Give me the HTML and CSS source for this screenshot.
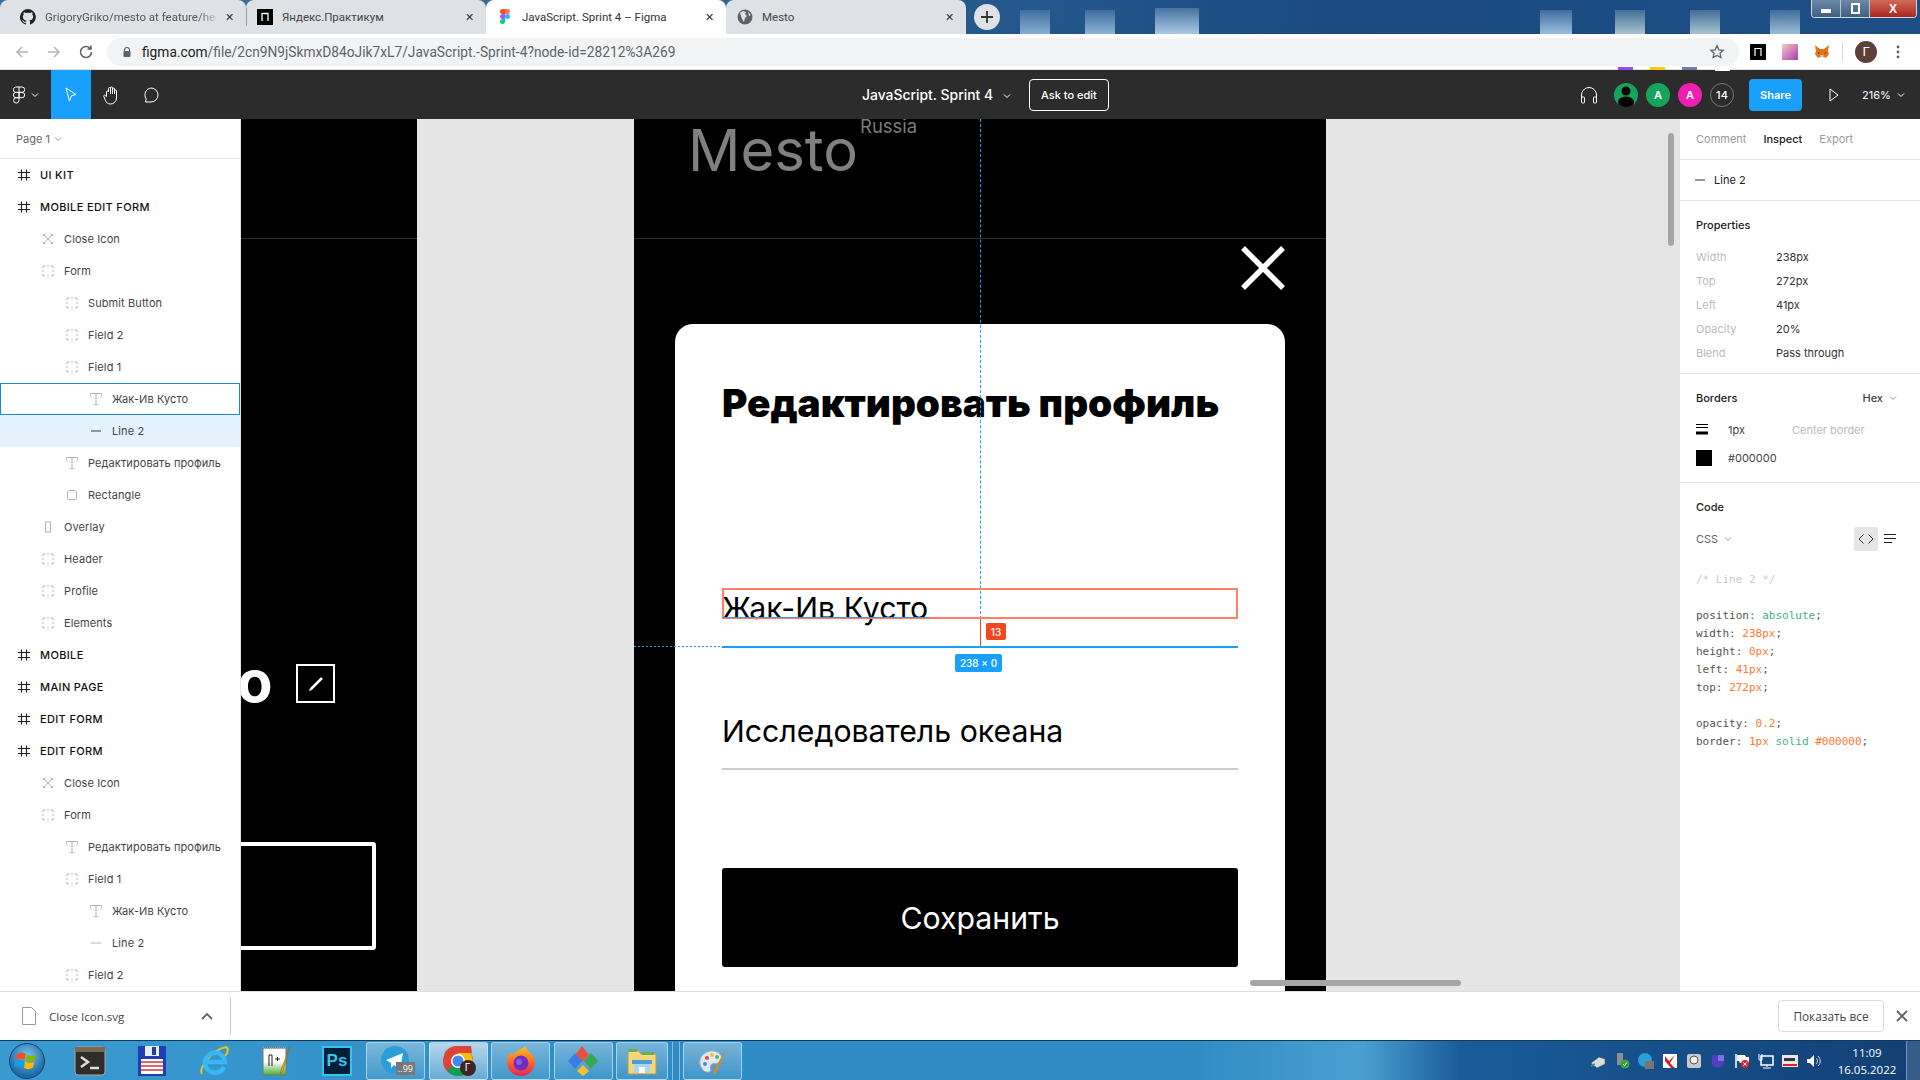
FILE: index.html
```html
<!DOCTYPE html>
<html lang="en">
<head>
    <meta charset="UTF-8">
    <title>JavaScript. Sprint 4 – Figma</title>
    <link rel="stylesheet" href="styles.css">
</head>
<body>

<svg class="defs" width="0" height="0">
    <symbol id="i-frame" viewBox="0 0 16 16"><path d="M5.500 2.500v11M10.500 2.500v11M2 5.500h12M2 10.500h12" fill="none" stroke="#222" stroke-width="1.200"/></symbol>
    <symbol id="i-group" viewBox="0 0 16 16"><path d="M3 3h2M7 3h2M11 3h2M3 13h2M7 13h2M11 13h2M3 3v2M3 7v2M3 11v2M13 3v2M13 7v2M13 11v2" fill="none" stroke="#b3b3b3"/></symbol>
    <symbol id="i-text" viewBox="0 0 16 16"><path d="M2.500 5V2.500h11V5M8 2.500v11M6 13.500h4" fill="none" stroke="#b3b3b3"/></symbol>
    <symbol id="i-line" viewBox="0 0 16 16"><path d="M3 8h10" stroke="#ccc" stroke-width="1.500"/></symbol>
    <symbol id="i-line-on" viewBox="0 0 16 16"><path d="M3 8h10" stroke="#777" stroke-width="1.500"/></symbol>
    <symbol id="i-rect" viewBox="0 0 16 16"><rect x="3.500" y="3.500" width="9" height="9" rx="1" fill="none" stroke="#b3b3b3"/></symbol>
    <symbol id="i-phone" viewBox="0 0 16 16"><rect x="5.500" y="3" width="5" height="10" fill="none" stroke="#b3b3b3"/></symbol>
    <symbol id="i-close" viewBox="0 0 16 16"><path d="M3 3l10 10M13 3L3 13M5 3L3 5M13 5l-2-2M3 11l2 2M11 13l2-2" fill="none" stroke="#b3b3b3"/></symbol>
    <symbol id="i-chev" viewBox="0 0 8 8"><path d="M1 2.500l3 3 3-3" fill="none" stroke="currentColor"/></symbol>
</svg>

<div class="chrome">
    <div class="tabstrip">
        <div class="tab">
            <svg class="tab-ico" viewBox="0 0 16 16"><path fill="#222" d="M8 0a8 8 0 0 0-2.500 15.600c.4.100.5-.2.5-.4v-1.400c-2.200.5-2.700-1-2.700-1-.4-.9-.9-1.200-.9-1.200-.7-.5.100-.5.100-.5.800.100 1.200.800 1.200.800.700 1.200 1.900.900 2.300.700.100-.5.300-.9.500-1.100-1.800-.2-3.600-.9-3.600-4 0-.9.300-1.600.800-2.100-.1-.2-.4-1 .100-2.100 0 0 .700-.2 2.200.800a7.600 7.600 0 0 1 4 0c1.500-1 2.200-.8 2.200-.8.400 1.100.2 1.900.1 2.100.5.600.8 1.300.8 2.100 0 3.100-1.900 3.700-3.700 3.900.3.300.6.800.6 1.500v2.200c0 .2.100.5.600.4A8 8 0 0 0 8 0z"/></svg>
            <span class="tab-title fade">GrigoryGriko/mesto at feature/he</span>
            <span class="tab-x">✕</span>
        </div>
        <div class="tab tab-sep">
            <svg class="tab-ico" viewBox="0 0 16 16"><rect width="16" height="16" fill="#000"/><path d="M5 12V4.500h6V12" fill="none" stroke="#fff" stroke-width="1.300"/></svg>
            <span class="tab-title">Яндекс.Практикум</span>
            <span class="tab-x">✕</span>
        </div>
        <div class="tab tab-active">
            <svg class="tab-ico" viewBox="0 0 16 16"><path fill="#f24e1e" d="M3 0h5v5H5.500a2.500 2.500 0 0 1 0-5z"/><path fill="#ff7262" d="M8 0h2.500a2.500 2.500 0 0 1 0 5H8z"/><path fill="#a259ff" d="M5.500 5H8v5H5.500a2.500 2.500 0 0 1 0-5z"/><circle cx="10.500" cy="7.500" r="2.500" fill="#1abcfe"/><path fill="#0acf83" d="M5.500 10H8v2.500A2.500 2.500 0 1 1 5.500 10z"/></svg>
            <span class="tab-title">JavaScript. Sprint 4 – Figma</span>
            <span class="tab-x">✕</span>
        </div>
        <div class="tab">
            <svg class="tab-ico" viewBox="0 0 16 16"><circle cx="8" cy="8" r="7.500" fill="#5f6368"/><path fill="#dee1e6" d="M3 4l3-2 3 1-1 2 2 2-2 2-1 4-2-3-1-3zM11 3l3 3-2 1z"/></svg>
            <span class="tab-title">Mesto</span>
            <span class="tab-x">✕</span>
        </div>
        <div class="newtab">
            <svg width="14" height="14" viewBox="0 0 14 14"><path d="M7 1v12M1 7h12" stroke="#333" stroke-width="1.800"/></svg>
        </div>
        <div class="winctl">
            <span class="winbtn"><i class="win-min"></i></span>
            <span class="winbtn"><i class="win-max"></i></span>
            <span class="winbtn winbtn-close">X</span>
        </div>
    </div>

    <div class="addressbar">
        <svg class="nav" viewBox="0 0 16 16"><path d="M14 8H3M8 3L3 8l5 5" fill="none" stroke="#b4b7bb" stroke-width="1.600"/></svg>
        <svg class="nav" viewBox="0 0 16 16"><path d="M2 8h11M8 3l5 5-5 5" fill="none" stroke="#b4b7bb" stroke-width="1.600"/></svg>
        <svg class="nav" viewBox="0 0 16 16"><path d="M13.500 8A5.500 5.500 0 1 1 12 4.200M13 1.500V5H9.500" fill="none" stroke="#5f6368" stroke-width="1.600"/></svg>
        <div class="omnibox">
            <svg class="lock" viewBox="0 0 12 12"><path d="M3.500 5.500V4a2.500 2.500 0 0 1 5 0v1.500" fill="none" stroke="#5f6368" stroke-width="1.200"/><rect x="2.500" y="5" width="7" height="6" rx="1" fill="#5f6368"/></svg>
            <span class="url"><b>figma.com</b>/file/2cn9N9jSkmxD84oJik7xL7/JavaScript.-Sprint-4?node-id=28212%3A269</span>
            <svg class="star" viewBox="0 0 16 16"><path d="M8 1.800l1.900 4 4.300.500-3.200 3 .900 4.300L8 11.400l-3.900 2.200.900-4.300-3.200-3 4.300-.5z" fill="none" stroke="#5f6368" stroke-width="1.300"/></svg>
        </div>
        <div class="exts">
            <svg class="ext" viewBox="0 0 16 16"><rect width="16" height="16" fill="#000"/><path d="M5 12V4.500h6V12" fill="none" stroke="#fff" stroke-width="1.200"/></svg>
            <svg class="ext" viewBox="0 0 16 16"><defs><linearGradient id="ext-grad" x1="0" y1="0" x2="1" y2="1"><stop offset="0" stop-color="#f8c8c0"/><stop offset="1" stop-color="#a83cb8"/></linearGradient></defs><rect width="16" height="16" fill="url(#ext-grad)"/></svg>
            <svg class="ext" viewBox="0 0 16 16"><path fill="#e2761b" d="M1 1l5 4h4l5-4-1 6 1 3-3 4-2-1H6l-2 1-3-4 1-3z"/><path fill="#f6c9a0" d="M6 11h4l-1 2H7z"/><path fill="#763d16" d="M4 8l2 1-2 1zM12 8l-2 1 2 1z"/></svg>
            <span class="ext-div"></span>
            <span class="profile">Г</span>
            <svg class="kebab" viewBox="0 0 4 16"><circle cx="2" cy="3" r="1.400" fill="#5f6368"/><circle cx="2" cy="8" r="1.400" fill="#5f6368"/><circle cx="2" cy="13" r="1.400" fill="#5f6368"/></svg>
        </div>
    </div>
</div>

<div class="toolbar">
    <div class="tool-left">
        <div class="tool-menu">
            <svg width="12" height="18" viewBox="0 0 12 18"><path d="M3 1h6a2.700 2.700 0 0 1 0 5.400H3A2.700 2.700 0 0 1 3 1zM3 6.400h3v5.300H3a2.650 2.650 0 0 1 0-5.300zM6 6.400h3a2.650 2.650 0 0 1 0 5.300H6zM3 11.700h3v2.700a2.700 2.700 0 1 1-3-2.700zM6 1v5.400" fill="none" stroke="#fff"/></svg>
            <svg class="chev-sm" viewBox="0 0 8 8"><use href="#i-chev"/></svg>
        </div>
        <div class="tool tool-on">
            <svg width="16" height="18" viewBox="0 0 16 18"><path d="M3 2l10 6.500-4.500 1.200L6.500 15z" fill="none" stroke="#fff"/></svg>
        </div>
        <div class="tool">
            <svg width="20" height="20" viewBox="0 0 20 20"><path d="M5.500 11V7a1 1 0 0 1 2 0V3.500a1 1 0 0 1 2 0V3a1 1 0 0 1 2 0v1a1 1 0 0 1 2 0v2a1 1 0 0 1 2 0v7a6 6 0 0 1-6 6c-3 0-4-1.500-5-3.500L2.800 11.500c-.6-1.200 1.200-2 2-.7l.7 1.200M9.500 3.500V9M11.500 3v6M13.500 4v5" fill="none" stroke="#fff"/></svg>
        </div>
        <div class="tool">
            <svg width="18" height="18" viewBox="0 0 18 18"><path d="M9 2a7 7 0 0 1 0 14H3.500l.7-3A7 7 0 0 1 9 2z" fill="none" stroke="#fff"/></svg>
        </div>
    </div>
    <div class="tool-title">JavaScript. Sprint 4 <svg class="chev-sm" viewBox="0 0 8 8"><use href="#i-chev"/></svg></div>
    <div class="ask">Ask to edit</div>
    <div class="tool-right">
        <svg class="phones" width="20" height="20" viewBox="0 0 20 20"><path d="M2.500 14v-4a7.500 7.500 0 0 1 15 0v4" fill="none" stroke="#fff"/><rect x="2.500" y="12" width="3" height="6" rx="1" fill="none" stroke="#fff"/><rect x="14.500" y="12" width="3" height="6" rx="1" fill="none" stroke="#fff"/></svg>
        <div class="avatars">
            <div class="avatar av-photo"><i class="cursor c-purple"></i>
                <svg width="24" height="24" viewBox="0 0 24 24"><circle cx="12" cy="8" r="4.500"/><ellipse cx="12" cy="19" rx="8" ry="5.500"/></svg>
            </div>
            <div class="avatar av-green"><i class="cursor c-yellow"></i>A</div>
            <div class="avatar av-pink"><i class="cursor c-steel"></i>A</div>
            <div class="avatar av-more"><i class="cursor c-white"></i>14</div>
        </div>
        <div class="share">Share</div>
        <svg class="play" width="12" height="14" viewBox="0 0 12 14"><path d="M2 1l8 6-8 6z" fill="none" stroke="#fff"/></svg>
        <div class="zoom">216% <svg class="chev-sm" viewBox="0 0 8 8"><use href="#i-chev"/></svg></div>
    </div>
</div>

<div class="workspace">
    <aside class="layers">
        <div class="page-name">Page 1 <svg class="chev-sm" viewBox="0 0 8 8"><use href="#i-chev"/></svg></div>
        <div class="layer d0"><svg class="layer-ico"><use href="#i-frame"/></svg>UI KIT</div>
        <div class="layer d0"><svg class="layer-ico"><use href="#i-frame"/></svg>MOBILE EDIT FORM</div>
        <div class="layer d1"><svg class="layer-ico"><use href="#i-close"/></svg>Close Icon</div>
        <div class="layer d1"><svg class="layer-ico"><use href="#i-group"/></svg>Form</div>
        <div class="layer d2"><svg class="layer-ico"><use href="#i-group"/></svg>Submit Button</div>
        <div class="layer d2"><svg class="layer-ico"><use href="#i-group"/></svg>Field 2</div>
        <div class="layer d2"><svg class="layer-ico"><use href="#i-group"/></svg>Field 1</div>
        <div class="layer d3 layer-hover"><svg class="layer-ico"><use href="#i-text"/></svg>Жак-Ив Кусто</div>
        <div class="layer d3 layer-sel"><svg class="layer-ico"><use href="#i-line-on"/></svg>Line 2</div>
        <div class="layer d2"><svg class="layer-ico"><use href="#i-text"/></svg>Редактировать профиль</div>
        <div class="layer d2"><svg class="layer-ico"><use href="#i-rect"/></svg>Rectangle</div>
        <div class="layer d1"><svg class="layer-ico"><use href="#i-phone"/></svg>Overlay</div>
        <div class="layer d1"><svg class="layer-ico"><use href="#i-group"/></svg>Header</div>
        <div class="layer d1"><svg class="layer-ico"><use href="#i-group"/></svg>Profile</div>
        <div class="layer d1"><svg class="layer-ico"><use href="#i-group"/></svg>Elements</div>
        <div class="layer d0"><svg class="layer-ico"><use href="#i-frame"/></svg>MOBILE</div>
        <div class="layer d0"><svg class="layer-ico"><use href="#i-frame"/></svg>MAIN PAGE</div>
        <div class="layer d0"><svg class="layer-ico"><use href="#i-frame"/></svg>EDIT FORM</div>
        <div class="layer d0"><svg class="layer-ico"><use href="#i-frame"/></svg>EDIT FORM</div>
        <div class="layer d1"><svg class="layer-ico"><use href="#i-close"/></svg>Close Icon</div>
        <div class="layer d1"><svg class="layer-ico"><use href="#i-group"/></svg>Form</div>
        <div class="layer d2"><svg class="layer-ico"><use href="#i-text"/></svg>Редактировать профиль</div>
        <div class="layer d2"><svg class="layer-ico"><use href="#i-group"/></svg>Field 1</div>
        <div class="layer d3"><svg class="layer-ico"><use href="#i-text"/></svg>Жак-Ив Кусто</div>
        <div class="layer d3"><svg class="layer-ico"><use href="#i-line"/></svg>Line 2</div>
        <div class="layer d2"><svg class="layer-ico"><use href="#i-group"/></svg>Field 2</div>
    </aside>

    <main class="canvas">
        <!-- frame on the left, cut by the layers panel -->
        <div class="frame frame-side">
            <div class="frame-rule"></div>
            <div class="side-name">o</div>
            <div class="side-edit">
                <svg width="18" height="18" viewBox="0 0 18 18"><path d="M4 14L15 3" stroke="#fff" stroke-width="2.500"/><path d="M2 16l1-3 2 2z" fill="#fff"/></svg>
            </div>
            <div class="side-card"></div>
        </div>

        <div class="frame frame-main">
            <div class="logo">Mesto</div>
            <div class="logo-sub">Russia</div>
            <div class="frame-rule"></div>
            <svg class="modal-close" width="44" height="44" viewBox="0 0 44 44"><path d="M2 2l40 40M42 2L2 42" stroke="#fff" stroke-width="5.500"/></svg>
            <div class="modal">
                <h1 class="modal-title">Редактировать профиль</h1>
                <div class="field-text field-name">Жак-Ив Кусто</div>
                <div class="field-line field-line-on"></div>
                <div class="field-text field-about">Исследователь океана</div>
                <div class="field-line"></div>
                <div class="submit">Сохранить</div>
            </div>
        </div>

        <!-- figma selection overlays -->
        <div class="guide-v"></div>
        <div class="guide-h"></div>
        <div class="hover-box"></div>
        <div class="text-under"></div>
        <div class="measure-line"></div>
        <div class="measure-badge">13</div>
        <div class="size-badge">238 × 0</div>
        <div class="scroll-v"></div>
        <div class="scroll-h"></div>
        <div class="help">?</div>
    </main>

    <aside class="inspect">
        <div class="insp-tabs">
            <span>Comment</span><span class="on">Inspect</span><span>Export</span>
        </div>
        <div class="insp-node"><svg class="node-ico" viewBox="0 0 16 16"><use href="#i-line-on"/></svg>Line 2</div>
        <section class="insp-sec sec-props">
            <h3>Properties</h3>
            <div class="prop"><span>Width</span><b>238px</b></div>
            <div class="prop"><span>Top</span><b>272px</b></div>
            <div class="prop"><span>Left</span><b>41px</b></div>
            <div class="prop"><span>Opacity</span><b>20%</b></div>
            <div class="prop"><span>Blend</span><b>Pass through</b></div>
        </section>
        <section class="insp-sec sec-borders">
            <h3 class="sec-head">Borders <em>Hex <svg class="chev-sm" viewBox="0 0 8 8"><use href="#i-chev"/></svg></em></h3>
            <div class="border-row">
                <svg class="border-ico" width="12" height="12" viewBox="0 0 12 12"><path d="M0 .5h12M0 3.500h12" stroke="#000"/><path d="M0 9h12" stroke="#000" stroke-width="3"/></svg>
                <span class="bw">1px</span><span class="bpos">Center border</span>
            </div>
            <div class="border-row row-color"><i class="swatch"></i><span class="bw">#000000</span></div>
        </section>
        <section class="insp-sec sec-code">
            <h3>Code</h3>
            <div class="code-head">
                <span class="lang">CSS <svg class="chev-sm" viewBox="0 0 8 8"><use href="#i-chev"/></svg></span>
                <span class="code-btn"><svg width="16" height="12" viewBox="0 0 16 12"><path d="M5.500 1.500L1 6l4.500 4.500M10.500 1.500L15 6l-4.500 4.500" fill="none" stroke="#333"/></svg></span>
                <svg class="wrap-ico" width="12" height="12" viewBox="0 0 12 12"><path d="M0 1.500h12M0 5.500h12M0 9.500h8" stroke="#222"/></svg>
            </div>
            <pre class="code"><span class="cm">/* Line 2 */</span>

position: <span class="kw">absolute</span>;
width: <span class="nm">238px</span>;
height: <span class="nm">0px</span>;
left: <span class="nm">41px</span>;
top: <span class="nm">272px</span>;

opacity: <span class="nm">0.2</span>;
border: <span class="nm">1px</span> <span class="kw">solid</span> <span class="nm">#000000</span>;</pre>
        </section>
    </aside>
</div>

<div class="downloads">
    <div class="dl-item">
        <svg width="14" height="18" viewBox="0 0 14 18"><path d="M.5.500h9l4 4v13H.500z" fill="#fff" stroke="#9a9a9a"/></svg>
        <span class="dl-name">Close Icon.svg</span>
        <svg class="dl-chev" width="12" height="8" viewBox="0 0 12 8"><path d="M1 7l5-5 5 5" fill="none" stroke="#5f6368" stroke-width="1.800"/></svg>
    </div>
    <div class="dl-all">Показать все</div>
    <svg class="dl-close" width="12" height="12" viewBox="0 0 12 12"><path d="M1 1l10 10M11 1L1 11" stroke="#5f6368" stroke-width="1.800"/></svg>
</div>

<footer class="taskbar">
    <div class="orb">
        <svg width="26" height="26" viewBox="0 0 26 26"><path fill="#f25022" d="M3 6c3-2 6-2 9 0l-1.500 6c-3-1.500-6-1.500-9 0z"/><path fill="#7fba00" d="M13 6.500c3 2 6 2 9 0l-1.500 6c-3 2-6 2-9 0z"/><path fill="#00a4ef" d="M1.500 13c3-1.500 6-1.500 8.800 0L9 19c-3-1.500-6-1.500-9 0z"/><path fill="#ffb900" d="M11.500 13.500c3 2 6 2 9 0L19 19.500c-3 2-6 2-9 0z"/></svg>
    </div>
    <div class="pinned">
        <svg class="tb-ico" viewBox="0 0 32 32"><rect x="1" y="2" width="30" height="28" rx="3" fill="#2f2d2a" stroke="#aaa"/><rect x="1" y="2" width="30" height="5" fill="#7b6a52"/><path d="M7 12l7 5-7 5" fill="none" stroke="#ddd" stroke-width="2.500"/><path d="M16 23h9" stroke="#ddd" stroke-width="2.500"/></svg>
        <svg class="tb-ico" viewBox="0 0 32 32"><path d="M2 1h28v30H2z" fill="#1d3fb3"/><rect x="9" y="1" width="14" height="10" fill="#e8eef5"/><rect x="16" y="2" width="4" height="8" fill="#1d3fb3"/><rect x="5" y="14" width="22" height="15" fill="#fff"/><path d="M5 17h22M5 21h22M5 25h22" stroke="#d23040" stroke-width="1.600"/></svg>
        <svg class="tb-ico" viewBox="0 0 32 32"><path d="M4 29C0 24 13 5 28 2c3 1 2 6-1 9" fill="none" stroke="#f0c020" stroke-width="2"/><path d="M26 22A10 10 0 1 1 27 17H8" fill="none" stroke="#35b8f5" stroke-width="4.500"/></svg>
        <svg class="tb-ico" viewBox="0 0 32 32"><defs><linearGradient id="npp-grad" x1="0" y1="0" x2="0" y2="1"><stop offset=".5" stop-color="#fff"/><stop offset="1" stop-color="#4cb030"/></linearGradient></defs><rect x="3" y="3" width="23" height="27" fill="url(#npp-grad)" stroke="#777"/><path d="M3 3h23" stroke="#999" stroke-width="2" stroke-dasharray="1 1"/><path d="M9 10v11M12 10v11M9 10h3M15 14h5M17.500 12v4" stroke="#222" fill="none"/><path d="M30 2L21 25l-1 4 3-3z" fill="#e0a020" stroke="#8a5a10" stroke-width=".5"/></svg>
        <div class="ps-ico"><span>Ps</span></div>
    </div>
    <div class="running">
        <div class="tb-btn">
            <svg class="tb-ico" viewBox="0 0 32 32"><circle cx="15" cy="15" r="14" fill="#2a9fd8"/><path d="M6 15l17-7-3 16-6-4-3 3v-5z" fill="#fff"/></svg>
            <span class="tb-badge">..99</span>
        </div>
        <div class="tb-btn tb-btn-on">
            <svg class="tb-ico" viewBox="0 0 32 32"><circle cx="16" cy="16" r="15" fill="#db4437"/><path d="M16 16L29 24A15 15 0 0 1 5 26z" fill="#0f9d58"/><path d="M16 16L16 1A15 15 0 0 1 30 20z" fill="#fbbc05"/><path d="M2 9A15 15 0 0 1 16 1h13l1 7H16z" fill="#db4437"/><circle cx="16" cy="16" r="7" fill="#fff"/><circle cx="16" cy="16" r="5.500" fill="#4285f4"/></svg>
            <span class="tb-profile">Г</span>
        </div>
        <div class="tb-btn">
            <svg class="tb-ico" viewBox="0 0 32 32"><defs><linearGradient id="ff-grad" x1="0" y1="0" x2="0" y2="1"><stop offset="0" stop-color="#ffc21c"/><stop offset=".6" stop-color="#ff5c2a"/><stop offset="1" stop-color="#e3255c"/></linearGradient></defs><path d="M20 1c1 5 10 8 10 16a14 14 0 0 1-28 0c0-5 2-8 4-10 0 2 1 3 2 3 1-4 7-4 12-9z" fill="url(#ff-grad)"/><circle cx="16" cy="18" r="7.500" fill="#6a2fc0"/><circle cx="14" cy="17" r="3" fill="#8f5be0"/></svg>
        </div>
        <div class="tb-btn">
            <svg class="tb-ico" viewBox="0 0 32 32"><path d="M15 1l7 9-7 7-7-7z" fill="#e5533d"/><path d="M8 8l7 8-7 8-7-8z" fill="#3b7de8"/><path d="M24 8l7 8-7 8-7-8z" fill="#36a853"/><path d="M16 20l6 6-6 5-6-5z" fill="#fbc02d"/></svg>
        </div>
        <div class="tb-btn tb-btn-folder">
            <svg class="tb-ico" viewBox="0 0 32 32"><path d="M2 6h11l2 3h15v20H2z" fill="#f3d77a" stroke="#b89a44"/><path d="M2 4h9v3H2zM16 7h12v3H16z" fill="#6ab04c"/><rect x="8" y="17" width="16" height="11" fill="#a9d7f2"/><rect x="6" y="15" width="20" height="4" fill="#4e9ed0"/><rect x="13" y="22" width="6" height="6" fill="#fff"/></svg>
        </div>
        <i class="tb-gap"></i>
        <div class="tb-btn">
            <svg class="tb-ico" viewBox="0 0 32 32"><path d="M3 20C1 10 10 5 17 6s10 8 6 11-7 0-9 3 2 6-2 7-7-2-9-7z" fill="#dfe7ef" stroke="#9aa"/><circle cx="10" cy="13" r="2" fill="#e04a3a"/><circle cx="15" cy="10" r="2" fill="#eec23a"/><circle cx="8" cy="19" r="2" fill="#3a8fe0"/><circle cx="20" cy="12" r="2" fill="#4bbb5a"/><path d="M30 2L17 25l-1 5 4-3z" fill="#c68a3a"/></svg>
        </div>
    </div>
    <div class="tray">
        <svg class="tr-ico" viewBox="0 0 16 16"><path d="M1 10l8-6 6 2v5l-8 4z" fill="#ddd" stroke="#555" stroke-width=".6"/><path d="M1 12l4-2v2l-4 2z" fill="#2a8"/></svg>
        <svg class="tr-ico" viewBox="0 0 16 16"><rect x="3" y="0" width="6" height="12" fill="#8a8f94"/><circle cx="11" cy="11" r="4.500" fill="#3aa040"/><path d="M9 11l1.500 1.500L13 9.500" stroke="#fff" fill="none"/></svg>
        <svg class="tr-ico" viewBox="0 0 16 16"><circle cx="7" cy="7" r="7" fill="#2a9fd8"/><rect x="7" y="8" width="9" height="8" fill="#777"/></svg>
        <svg class="tr-ico" viewBox="0 0 16 16"><rect width="14" height="14" x="1" y="1" fill="#fff"/><path d="M3 3l4 5 6-6-5 8 5 5H9L3 8z" fill="#d21f2c"/></svg>
        <svg class="tr-ico" viewBox="0 0 16 16"><rect x="1" y="1" width="14" height="14" rx="2" fill="#c9c9c9"/><circle cx="8" cy="7" r="4" fill="#eee" stroke="#555"/></svg>
        <svg class="tr-ico" viewBox="0 0 16 16"><path d="M2 2h12v8c0 3-3 4-6 5-3-1-6-2-6-5z" fill="#5040c0"/><path d="M8 2h6v6H8z" fill="#8070e0"/></svg>
        <svg class="tr-ico" viewBox="0 0 16 16"><path d="M2 1v14" stroke="#fff" stroke-width="1.500"/><path d="M3 2h8l1 2h3v6H6L5 8H3z" fill="#fff"/><circle cx="11" cy="11" r="4" fill="#e02030"/><path d="M9 9l4 4M13 9l-4 4" stroke="#fff"/></svg>
        <svg class="tr-ico" viewBox="0 0 16 16"><rect x="3" y="3" width="12" height="9" fill="none" stroke="#fff" stroke-width="1.500"/><path d="M9 12v2M5 15h8M1 1v6h3V1" stroke="#fff" fill="none"/></svg>
        <svg class="tr-ico" viewBox="0 0 16 16"><rect y="2" width="16" height="12" fill="#e6e6e6"/><rect x="2" y="5" width="11" height="3" fill="#333"/><rect x="1" y="11" width="14" height="2" fill="#d22"/></svg>
        <svg class="tr-ico" viewBox="0 0 16 16"><path d="M1 6h3l4-4v12l-4-4H1z" fill="#fff"/><path d="M10 5c2 2 2 4 0 6M12 3c3 3 3 7 0 10" fill="none" stroke="#cde"/></svg>
    </div>
    <div class="clock"><span>11:09</span><span>16.05.2022</span></div>
    <div class="show-desktop"></div>
</footer>

</body>
</html>
```

FILE: styles.css
```css
* {
    box-sizing: border-box;
}
html, body {
    margin: 0;
    height: 100%;
}
body {
    width: 1920px;
    height: 1080px;
    overflow: hidden;
    display: flex;
    flex-direction: column;
    font-family: 'Inter', 'Liberation Sans', sans-serif;
    font-size: 11px;
    color: #333;
    background: #fff;
}
.defs {
    position: absolute;
}
.chev-sm {
    width: 8px;
    height: 8px;
    color: inherit;
}

/* browser window */
.tabstrip {
    height: 34px;
    display: flex;
    background-color: #1f5488;
    background-image:
        linear-gradient(rgba(169, 203, 234, .2), rgba(169, 203, 234, .75)),
        linear-gradient(rgba(169, 203, 234, .2), rgba(169, 203, 234, .8)),
        linear-gradient(rgba(185, 214, 238, .25), rgba(185, 214, 238, .9)),
        linear-gradient(rgba(169, 203, 234, .25), rgba(169, 203, 234, .9)),
        linear-gradient(rgba(183, 207, 216, .25), rgba(183, 207, 216, .9)),
        linear-gradient(rgba(183, 207, 216, .25), rgba(183, 207, 216, .9)),
        linear-gradient(rgba(169, 200, 222, .25), rgba(169, 200, 222, .9)),
        linear-gradient(100deg, #3d6f9e 0, #2c6294 40%, #1a4a80 70%, #1d4f84 100%);
    background-size: 30px 24px, 30px 24px, 44px 26px, 32px 24px, 30px 24px, 30px 24px, 30px 24px, 100% 100%;
    background-position: 1020px 10px, 1085px 10px, 1155px 8px, 1540px 10px, 1615px 10px, 1690px 10px, 1770px 10px, 0 0;
    background-repeat: no-repeat;
}
.tab {
    position: relative;
    width: 240px;
    height: 34px;
    display: flex;
    align-items: center;
    padding: 0 12px 0 11px;
    background: #dee1e6;
    border-radius: 8px 8px 0 0;
    font-family: 'Roboto', sans-serif;
    font-size: 11.5px;
    color: #444;
}
.tab:first-child {
    width: 246px;
    padding-left: 20px;
}
.tab-sep::before {
    content: "";
    position: absolute;
    left: 0;
    top: 8px;
    height: 18px;
    border-left: 1px solid #9aa0a6;
}
.tab-active {
    background: #fff;
    color: #333;
}
.tab:last-of-type {
    width: 238px;
}
.tab-ico {
    width: 16px;
    height: 16px;
    flex: none;
    margin-right: 9px;
}
.tab-title {
    flex: 1;
    white-space: nowrap;
    overflow: hidden;
}
.fade {
    color: #555;
    -webkit-mask-image: linear-gradient(to right, #000 88%, transparent);
}
.tab-x {
    font-size: 11px;
    color: #333;
    margin-left: 6px;
}
.newtab {
    width: 26px;
    height: 26px;
    margin: 4px 0 0 8px;
    border-radius: 50%;
    background: #dee1e6;
    display: flex;
    align-items: center;
    justify-content: center;
}
.winctl {
    margin-left: auto;
    margin-right: 3px;
    height: 18px;
    display: flex;
    border: 1px solid #cfd8e0;
    border-top: 0;
    border-radius: 0 0 4px 4px;
    overflow: hidden;
}
.winbtn {
    width: 29px;
    display: flex;
    align-items: center;
    justify-content: center;
    background: linear-gradient(#6d8aa6, #3f5f80);
    border-right: 1px solid #b5c4d2;
}
.winbtn-close {
    width: 46px;
    border-right: 0;
    background: linear-gradient(#d26a5c, #a8281c);
    color: #fff;
    font-family: 'Liberation Sans', sans-serif;
    font-size: 12px;
    font-weight: bold;
}
.win-min {
    width: 10px;
    height: 4px;
    margin-top: 4px;
    background: #fff;
}
.win-max {
    width: 9px;
    height: 11px;
    border: 2px solid #fff;
}
.addressbar {
    height: 36px;
    display: flex;
    align-items: center;
    background: #fff;
    padding-left: 14px;
    border-bottom: 1px solid #e0e0e0;
}
.nav {
    width: 16px;
    height: 16px;
    margin-right: 16px;
}
.omnibox {
    width: 1632px;
    height: 28px;
    margin-left: -3px;
    border-radius: 14px;
    background: #f1f3f4;
    display: flex;
    align-items: center;
    padding: 0 14px;
}
.lock {
    width: 12px;
    height: 12px;
    margin-right: 9px;
}
.url {
    font-family: 'Roboto', sans-serif;
    font-size: 13.75px;
    color: #5f6368;
    flex: 1;
    white-space: nowrap;
}
.url b {
    font-weight: 400;
    color: #202124;
}
.star {
    width: 16px;
    height: 16px;
}
.exts {
    display: flex;
    align-items: center;
    margin-left: 11px;
}
.ext {
    width: 16px;
    height: 16px;
    margin-right: 16px;
}
.ext-div {
    width: 1px;
    height: 20px;
    background: #dadce0;
    margin: 0 12px 0 -4px;
}
.profile {
    width: 22px;
    height: 22px;
    border-radius: 50%;
    background: #5d4037;
    color: #fff;
    font-family: 'Roboto', sans-serif;
    font-size: 13px;
    display: flex;
    align-items: center;
    justify-content: center;
}
.kebab {
    width: 4px;
    height: 16px;
    margin-left: 19px;
}

/* figma toolbar */
.toolbar {
    height: 49px;
    background: #2c2c2c;
    color: #fff;
    display: flex;
    align-items: center;
}
.tool-left {
    flex: 0 0 862px;
    height: 100%;
    display: flex;
}
.tool-menu {
    width: 51px;
    display: flex;
    align-items: center;
    justify-content: center;
    gap: 6px;
}
.tool {
    width: 40px;
    display: flex;
    align-items: center;
    justify-content: center;
}
.tool-on {
    background: #18a0fb;
}
.tool-title {
    width: 167px;
    font-size: 13.9px;
    font-weight: 500;
    white-space: nowrap;
}
.tool-title .chev-sm {
    margin-left: 6px;
}
.ask {
    width: 80px;
    height: 32px;
    border: 1px solid #fff;
    border-radius: 4px;
    display: flex;
    align-items: center;
    justify-content: center;
    font-weight: 500;
}
.tool-right {
    margin-left: auto;
    display: flex;
    align-items: center;
}
.phones {
    margin-right: 15px;
}
.avatars {
    display: flex;
    gap: 8px;
    margin-right: 15px;
}
.avatar {
    position: relative;
    width: 24px;
    height: 24px;
    border-radius: 50%;
    display: flex;
    align-items: center;
    justify-content: center;
    font-weight: 600;
    overflow: visible;
}
.avatar svg {
    border-radius: 50%;
}
.av-photo {
    background: #16a45c;
}
.av-green {
    background: #16a45c;
}
.av-pink {
    background: #f01fb0;
}
.av-more {
    border: 1px solid #777;
    font-weight: 500;
}
.cursor {
    position: absolute;
    top: -16px;
    left: 4px;
    width: 15px;
    height: 3px;
}
.c-purple { background: #9747ff; }
.c-yellow { background: #ffc700; }
.c-steel { background: #6b7fa8; }
.c-white { background: #fff; }
.share {
    width: 53px;
    height: 32px;
    background: #18a0fb;
    border-radius: 4px;
    display: flex;
    align-items: center;
    justify-content: center;
    font-weight: 600;
    margin-right: 26px;
}
.play {
    margin-right: 22px;
}
.zoom {
    width: 58px;
    white-space: nowrap;
}
.zoom .chev-sm {
    margin-left: 3px;
}

/* main area */
.workspace {
    height: 872px;
    display: flex;
}
.layers {
    width: 241px;
    flex: none;
    background: #fff;
    border-right: 1px solid #e5e5e5;
    overflow: hidden;
    z-index: 1;
}
.page-name {
    height: 40px;
    padding-left: 16px;
    border-bottom: 1px solid #e5e5e5;
    display: flex;
    align-items: center;
    gap: 4px;
    color: #666;
}
.page-name .chev-sm {
    color: #999;
}
.layer {
    height: 32px;
    display: flex;
    align-items: center;
    white-space: nowrap;
    letter-spacing: .1px;
    color: #444;
}
.layer-ico {
    width: 16px;
    height: 16px;
    flex: none;
    margin-right: 8px;
}
.d0 {
    padding-left: 16px;
    color: #111;
    font-weight: 500;
    letter-spacing: .35px;
}
.d1 { padding-left: 40px; }
.d2 { padding-left: 64px; }
.d3 { padding-left: 88px; }
.layer-hover {
    border: 1px solid #1a86e0;
    padding-left: 87px;
}
.layer-sel {
    background: #e3f2fd;
}

.canvas {
    position: relative;
    flex: 1;
    overflow: hidden;
    background: #e5e5e5;
}
.frame {
    position: absolute;
    top: 0;
    bottom: 0;
    background: #000;
}
.frame-rule {
    position: absolute;
    top: 119px;
    left: 0;
    right: 0;
    height: 1px;
    background: #2e2e2e;
}
.frame-side {
    left: 0;
    width: 176px;
}
.side-name {
    position: absolute;
    left: -4px;
    top: 528px;
    font-size: 58px;
    line-height: 68px;
    font-weight: 700;
    color: #fff;
}
.side-edit {
    position: absolute;
    left: 55px;
    top: 545px;
    width: 39px;
    height: 39px;
    border: 2px solid #fff;
    display: flex;
    align-items: center;
    justify-content: center;
}
.side-card {
    position: absolute;
    left: -20px;
    top: 723px;
    width: 155px;
    height: 108px;
    border: 4px solid #fff;
    border-radius: 3px;
}
.frame-main {
    left: 393px;
    width: 692px;
}
.logo {
    position: absolute;
    left: 54px;
    top: -3px;
    font-size: 58px;
    line-height: 68px;
    color: #808080;
}
.logo-sub {
    position: absolute;
    left: 226px;
    top: -4px;
    font-size: 18.5px;
    line-height: 22px;
    color: #7a7a7a;
}
.modal-close {
    position: absolute;
    left: 607px;
    top: 127px;
}
.modal {
    position: absolute;
    left: 41px;
    top: 205px;
    width: 610px;
    height: 700px;
    background: #fff;
    border-radius: 18px;
    padding: 56px 47px;
    color: #000;
}
.modal-title {
    margin: 0 0 161px;
    height: 47px;
    font-size: 38.7px;
    line-height: 47px;
    font-weight: 900;
    white-space: nowrap;
}
.field-text {
    height: 31px;
    font-size: 30.25px;
    white-space: nowrap;
}
.field-name {
    line-height: 41px;
}
.field-about {
    line-height: 31px;
    margin-top: 68px;
}
.field-line {
    height: 2px;
    margin-top: 21px;
    background: #ccc;
}
.field-line-on {
    margin-top: 27px;
    background: #18a0fb;
}
.submit {
    height: 99px;
    margin-top: 98px;
    background: #000;
    border-radius: 3px;
    color: #fff;
    font-size: 30.25px;
    display: flex;
    align-items: center;
    justify-content: center;
}

/* selection overlays */
.guide-v {
    position: absolute;
    left: 739px;
    top: 0;
    height: 500px;
    border-left: 1px dashed #18a0fb;
}
.guide-h {
    position: absolute;
    left: 393px;
    top: 527px;
    width: 346px;
    height: 1px;
    background: repeating-linear-gradient(90deg, #18a0fb 0 2px, transparent 2px 4px);
}
.hover-box {
    position: absolute;
    left: 481px;
    top: 469px;
    width: 516px;
    height: 31px;
    border: 2px solid #ff8066;
}
.text-under {
    position: absolute;
    left: 481px;
    top: 498px;
    width: 208px;
    height: 1px;
    background: #4a90d9;
}
.measure-line {
    position: absolute;
    left: 739px;
    top: 500px;
    width: 1px;
    height: 27px;
    background: #f24822;
}
.measure-badge {
    position: absolute;
    left: 745px;
    top: 504px;
    width: 20px;
    height: 17px;
    border-radius: 2px;
    background: #f24822;
    color: #fff;
    font-size: 10px;
    font-weight: 500;
    display: flex;
    align-items: center;
    justify-content: center;
}
.size-badge {
    position: absolute;
    left: 714px;
    top: 535px;
    width: 47px;
    height: 18px;
    border-radius: 2px;
    background: #18a0fb;
    color: #fff;
    font-size: 10px;
    font-weight: 500;
    display: flex;
    align-items: center;
    justify-content: center;
}
.scroll-v {
    position: absolute;
    left: 1427px;
    top: 14px;
    width: 6px;
    height: 113px;
    border-radius: 3px;
    background: #a5a5a5;
}
.scroll-h {
    position: absolute;
    left: 1009px;
    top: 861px;
    width: 211px;
    height: 6px;
    border-radius: 3px;
    background: #a5a5a5;
}
.help {
    position: absolute;
    left: 1618px;
    top: 811px;
    width: 36px;
    height: 36px;
    border-radius: 50%;
    background: #222;
    color: #fff;
    font-size: 14px;
    font-weight: 500;
    display: flex;
    align-items: center;
    justify-content: center;
}

/* right panel */
.inspect {
    width: 240px;
    flex: none;
    background: #fff;
    z-index: 1;
}
.insp-tabs {
    height: 41px;
    padding-left: 16px;
    display: flex;
    align-items: center;
    gap: 17px;
    border-bottom: 1px solid #e5e5e5;
    color: #999;
}
.insp-tabs .on {
    color: #222;
    font-weight: 500;
}
.insp-node {
    height: 41px;
    padding-left: 12px;
    display: flex;
    align-items: center;
    gap: 6px;
    border-bottom: 1px solid #e5e5e5;
    color: #222;
}
.node-ico {
    width: 16px;
    height: 16px;
}
.insp-sec {
    padding: 0 16px;
    border-bottom: 1px solid #e5e5e5;
}
.insp-sec h3 {
    margin: 0;
    height: 24px;
    display: flex;
    align-items: center;
    font-size: 11px;
    font-weight: 500;
    color: #222;
}
.sec-props {
    height: 173px;
    padding-top: 12px;
}
.sec-props h3 {
    margin-bottom: 8px;
}
.prop {
    height: 24px;
    display: flex;
    align-items: center;
    color: #333;
}
.prop span {
    width: 80px;
    color: #bbb;
}
.prop b {
    font-weight: 400;
}
.sec-borders {
    height: 109px;
    padding-top: 12px;
}
.sec-head em {
    margin-left: auto;
    margin-right: 7px;
    font-style: normal;
    color: #444;
    display: flex;
    align-items: center;
    gap: 6px;
}
.sec-head .chev-sm {
    color: #999;
}
.border-row {
    height: 28px;
    display: flex;
    align-items: center;
    margin-top: 6px;
}
.row-color {
    margin-top: 0;
}
.border-ico {
    margin-right: 20px;
}
.bw {
    width: 64px;
    color: #444;
}
.bpos {
    color: #bbb;
}
.swatch {
    width: 16px;
    height: 16px;
    background: #000;
    margin-right: 16px;
}
.row-color .bw {
    color: #444;
}
.sec-code {
    border-bottom: 0;
    padding-top: 12px;
}
.code-head {
    height: 24px;
    margin-top: 8px;
    display: flex;
    align-items: center;
    color: #666;
}
.lang {
    color: #666;
}
.lang .chev-sm {
    color: #999;
    margin-left: 3px;
}
.code-btn {
    width: 24px;
    height: 24px;
    margin-left: auto;
    border-radius: 2px;
    background: #e5e5e5;
    display: flex;
    align-items: center;
    justify-content: center;
}
.wrap-ico {
    margin: 0 8px 0 6px;
}
.code {
    margin: 20px 0 0;
    font-family: 'DejaVu Sans Mono', 'Liberation Mono', monospace;
    font-size: 11px;
    line-height: 18px;
    color: #555;
}
.cm { color: #ccc; }
.kw { color: #3cb482; }
.nm { color: #ff7a2f; }

/* download shelf */
.downloads {
    height: 49px;
    background: #fff;
    border-top: 1px solid #ddd;
    display: flex;
    align-items: center;
    font-family: 'Open Sans', sans-serif;
    font-size: 12px;
    color: #444;
    z-index: 1;
}
.dl-item {
    width: 231px;
    height: 36px;
    padding-left: 22px;
    display: flex;
    align-items: center;
    border-right: 1px solid #ccc;
}
.dl-name {
    margin-left: 13px;
    flex: 1;
    font-size: 11.5px;
}
.dl-chev {
    margin-right: 17px;
}
.dl-all {
    width: 106px;
    height: 32px;
    margin-left: auto;
    border: 1px solid #dadce0;
    border-radius: 4px;
    font-size: 11.8px;
    display: flex;
    align-items: center;
    justify-content: center;
}
.dl-close {
    margin: 0 12px 0 12px;
}

/* windows taskbar */
.taskbar {
    height: 40px;
    display: flex;
    align-items: center;
    border-top: 1px solid #12395c;
    background: linear-gradient(90deg, #3a9ad0 0, #2f8cc4 35%, #2f8cc4 62%, #4a9fd0 71%, #1a5c9a 76%, #123f74 100%);
}
.orb {
    width: 36px;
    height: 36px;
    margin-left: 9px;
    border-radius: 50%;
    border: 1px solid #123f74;
    background: radial-gradient(circle at 50% 35%, #7cc7ee, #1c6aa8 70%);
    display: flex;
    align-items: center;
    justify-content: center;
    flex: none;
}
.pinned {
    display: flex;
    align-items: center;
    margin-left: 29px;
    gap: 30px;
    flex: none;
}
.tb-ico {
    width: 32px;
    height: 32px;
    flex: none;
}
.ps-ico {
    width: 30px;
    height: 30px;
    background: #001e36;
    border: 2px solid #31c5f0;
    color: #31c5f0;
    font-family: 'Liberation Sans', sans-serif;
    font-size: 17px;
    font-weight: bold;
    display: flex;
    align-items: center;
    justify-content: center;
}
.running {
    display: flex;
    margin-left: 14px;
    gap: 3.5px;
    flex: none;
}
.tb-btn {
    position: relative;
    width: 59px;
    height: 38px;
    border: 1px solid rgba(220, 240, 255, .6);
    border-radius: 3px;
    background: linear-gradient(rgba(255, 255, 255, .35), rgba(255, 255, 255, .08));
    display: flex;
    align-items: center;
    justify-content: center;
}
.tb-btn-on {
    background: linear-gradient(rgba(255, 255, 255, .65), rgba(255, 255, 255, .25));
}
.tb-btn-folder {
    width: 52px;
}
.tb-gap {
    width: 8px;
    border-left: 1px solid rgba(220, 240, 255, .5);
    border-right: 1px solid rgba(220, 240, 255, .5);
}
.tb-badge {
    position: absolute;
    right: 9px;
    bottom: 4px;
    padding: 0 2px;
    background: #777;
    color: #fff;
    font-family: 'Open Sans', sans-serif;
    font-size: 9px;
    line-height: 13px;
}
.tb-profile {
    position: absolute;
    right: 11px;
    bottom: 3px;
    width: 16px;
    height: 16px;
    border-radius: 50%;
    background: #3e2723;
    color: #fff;
    font-family: 'Roboto', sans-serif;
    font-size: 10px;
    display: flex;
    align-items: center;
    justify-content: center;
}
.tray {
    margin-left: auto;
    display: flex;
    align-items: center;
    gap: 8px;
}
.tr-ico {
    width: 16px;
    height: 16px;
}
.clock {
    width: 72px;
    margin-left: 9px;
    padding-top: 1px;
    display: flex;
    flex-direction: column;
    align-items: center;
    font-family: 'Open Sans', sans-serif;
    font-size: 11.5px;
    line-height: 17px;
    color: #fff;
}
.show-desktop {
    width: 14px;
    height: 39px;
    margin-left: 3px;
    border-left: 1px solid #6d94b8;
    background: rgba(255, 255, 255, .15);
}
```
